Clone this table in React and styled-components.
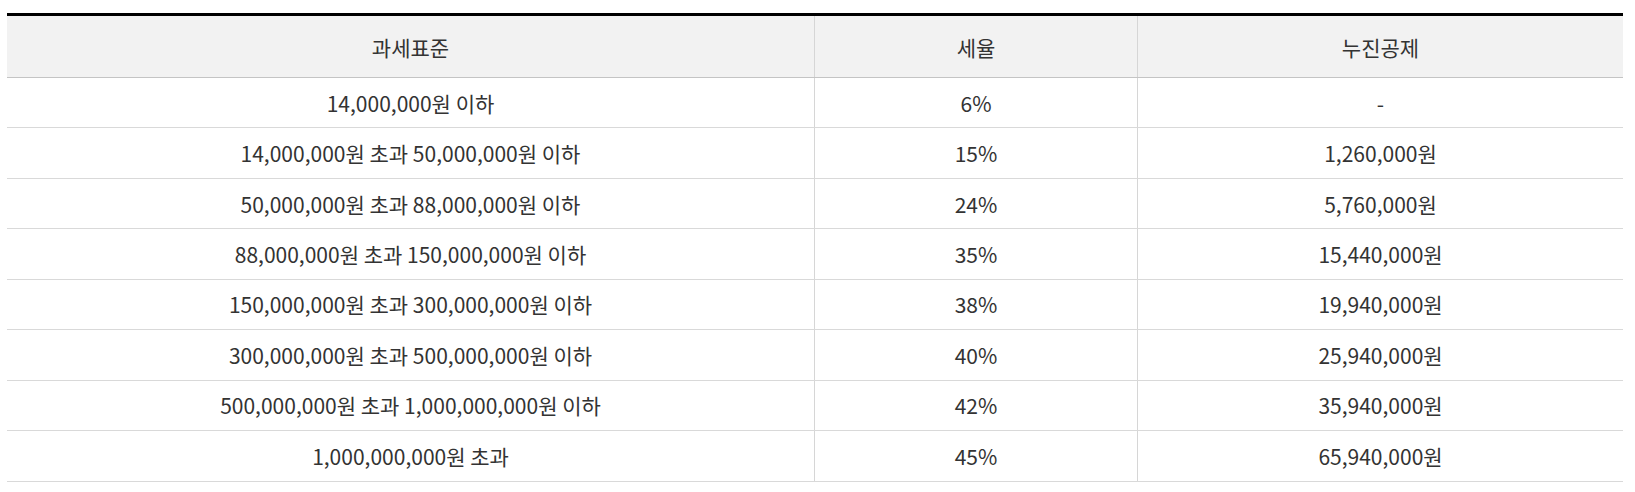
import React from "react";
import styled, { createGlobalStyle } from "styled-components";

const Global = createGlobalStyle`
  html, body { margin: 0; padding: 0; background: #fff; }
  body { font-family: "Noto Sans CJK KR", "Noto Sans", sans-serif; }
`;

const Wrap = styled.div`
  padding: 13px 12px 0 7px;
`;

const Table = styled.div`
  width: 1616px;
  border-top: 3px solid #000;
  color: #333;
  font-size: 21px;
`;

const Row = styled.div`
  display: grid;
  grid-template-columns: 807px 323px 486px;
  box-sizing: border-box;
  height: ${(p) => (p.$head ? "62px" : "50.45px")};
  background: ${(p) => (p.$head ? "#f2f2f2" : "#fff")};
  border-bottom: 1px solid ${(p) => (p.$head ? "#c4c4c4" : "#d9d9d9")};
`;

const Cell = styled.div`
  display: flex;
  align-items: center;
  justify-content: center;
  white-space: nowrap;
  & + & { border-left: 1px solid #d6d6d6; }
`;

const rows = [
  ["14,000,000원 이하", "6%", "-"],
  ["14,000,000원 초과 50,000,000원 이하", "15%", "1,260,000원"],
  ["50,000,000원 초과 88,000,000원 이하", "24%", "5,760,000원"],
  ["88,000,000원 초과 150,000,000원 이하", "35%", "15,440,000원"],
  ["150,000,000원 초과 300,000,000원 이하", "38%", "19,940,000원"],
  ["300,000,000원 초과 500,000,000원 이하", "40%", "25,940,000원"],
  ["500,000,000원 초과 1,000,000,000원 이하", "42%", "35,940,000원"],
  ["1,000,000,000원 초과", "45%", "65,940,000원"],
];

export default function App() {
  return (
    <Wrap>
      <Global />
      <Table role="table">
        <Row $head role="row">
          <Cell role="columnheader">과세표준</Cell>
          <Cell role="columnheader">세율</Cell>
          <Cell role="columnheader">누진공제</Cell>
        </Row>
        {rows.map((r, i) => (
          <Row key={i} role="row">
            <Cell role="cell">{r[0]}</Cell>
            <Cell role="cell">{r[1]}</Cell>
            <Cell role="cell">{r[2]}</Cell>
          </Row>
        ))}
      </Table>
    </Wrap>
  );
}
